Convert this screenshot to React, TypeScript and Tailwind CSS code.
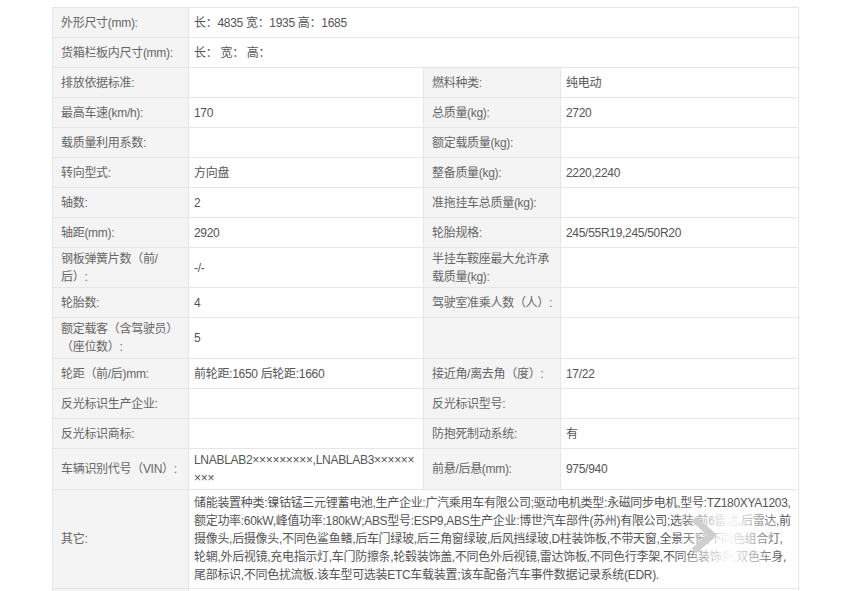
const rows: { l: string; v: string; l2?: string; v2?: string; h?: string }[] = [
  { l: "外形尺寸(mm):", v: "长：4835 宽：1935 高：1685" },
  { l: "货箱栏板内尺寸(mm):", v: "长：  宽：  高：" },
  { l: "排放依据标准:", v: "", l2: "燃料种类:", v2: "纯电动" },
  { l: "最高车速(km/h):", v: "170", l2: "总质量(kg):", v2: "2720" },
  { l: "载质量利用系数:", v: "", l2: "额定载质量(kg):", v2: "" },
  { l: "转向型式:", v: "方向盘", l2: "整备质量(kg):", v2: "2220,2240" },
  { l: "轴数:", v: "2", l2: "准拖挂车总质量(kg):", v2: "" },
  { l: "轴距(mm):", v: "2920", l2: "轮胎规格:", v2: "245/55R19,245/50R20" },
  { l: "钢板弹簧片数（前/后）:", v: "-/-", l2: "半挂车鞍座最大允许承载质量(kg):", v2: "", h: "h-[40px]" },
  { l: "轮胎数:", v: "4", l2: "驾驶室准乘人数（人）:", v2: "" },
  { l: "额定载客（含驾驶员）（座位数）:", v: "5", l2: "", v2: "", h: "h-[41px]" },
  { l: "轮距（前/后)mm:", v: "前轮距:1650 后轮距:1660", l2: "接近角/离去角（度）:", v2: "17/22" },
  { l: "反光标识生产企业:", v: "", l2: "反光标识型号:", v2: "" },
  { l: "反光标识商标:", v: "", l2: "防抱死制动系统:", v2: "有" },
  { l: "车辆识别代号（VIN）:", v: "LNABLAB2×××××××××,LNABLAB3×××××××××", l2: "前悬/后悬(mm):", v2: "975/940", h: "h-[41px]" },
];

const other =
  "储能装置种类:镍钴锰三元锂蓄电池,生产企业:广汽乘用车有限公司;驱动电机类型:永磁同步电机,型号:TZ180XYA1203,额定功率:60kW,峰值功率:180kW;ABS型号:ESP9,ABS生产企业:博世汽车部件(苏州)有限公司;选装:前6雷达,后雷达,前摄像头,后摄像头,不同色鲨鱼鳍,后车门绿玻,后三角窗绿玻,后风挡绿玻,D柱装饰板,不带天窗,全景天窗,不同色组合灯,轮辋,外后视镜,充电指示灯,车门防擦条,轮毂装饰盖,不同色外后视镜,雷达饰板,不同色行李架,不同色装饰条,双色车身,尾部标识,不同色扰流板.该车型可选装ETC车载装置;该车配备汽车事件数据记录系统(EDR).";

const lab = "bg-[#f4f4f4] text-[#666] px-2 align-middle border border-[#e6e6e6] leading-[18px]";
const val = "bg-white text-[#555] px-[5px] align-middle border border-[#e6e6e6] leading-[18px]";

export default function App() {
  return (
    <div className="w-[852px] h-[591px] overflow-hidden bg-white pt-[7px] pl-[52px] text-[12px] tracking-[-0.3px]" style={{ fontFamily: '"Liberation Sans","Noto Sans CJK SC",sans-serif' }}>
      <div className="relative w-[746px]">
        <table className="w-[746px] border-collapse table-fixed">
          <colgroup>
            <col className="w-[136px]" />
            <col className="w-[235px]" />
            <col className="w-[137px]" />
            <col className="w-[238px]" />
          </colgroup>
          <tbody>
            {rows.map((r, i) => (
              <tr key={i} className={r.h ?? "h-[30px]"}>
                <td className={lab}>{r.l}</td>
                {r.l2 === undefined ? (
                  <td className={val} colSpan={3}>{r.v}</td>
                ) : (
                  <>
                    <td className={val + " break-all"}>{r.v}</td>
                    <td className={lab + " pr-1"}>{r.l2}</td>
                    <td className={val}>{r.v2}</td>
                  </>
                )}
              </tr>
            ))}
            <tr className="h-[86px]">
              <td className={lab}>其它:</td>
              <td className={val + " break-all py-1"} colSpan={3}>{other}</td>
            </tr>
            <tr className="h-[30px]">
              <td className={lab + " align-top pt-[6px]"}>说明:</td>
              <td className={val} colSpan={3}></td>
            </tr>
          </tbody>
        </table>
        <div className="absolute left-[622px] top-[500px] w-[110px] h-[56px] bg-gradient-to-r from-white/0 via-white/95 to-white/0 flex items-center justify-start pl-[16px]">
          <svg width="26" height="40" viewBox="0 0 26 40">
            <path d="M4 4 L22 20 L4 36" fill="none" stroke="#cfcfcf" strokeWidth="7" strokeLinejoin="round" />
          </svg>
        </div>
      </div>
    </div>
  );
}
